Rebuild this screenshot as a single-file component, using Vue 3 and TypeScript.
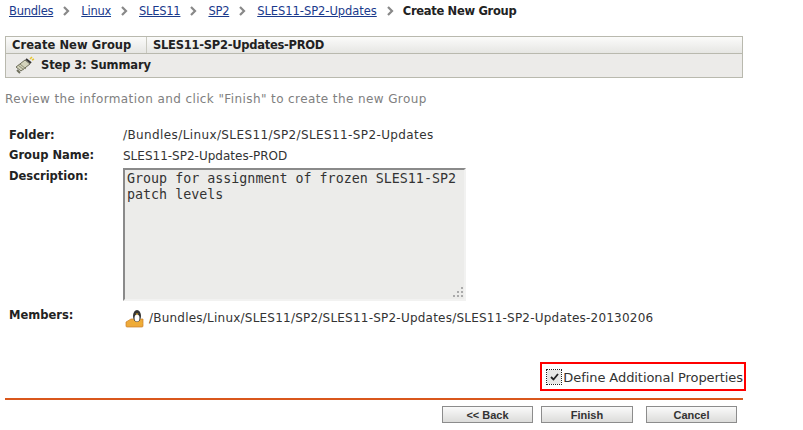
<script setup lang="ts">
const crumbs: string[] = ['Bundles', 'Linux', 'SLES11', 'SP2', 'SLES11-SP2-Updates']
</script>

<template>
  <div class="page">
    <nav class="crumbs">
      <template v-for="c in crumbs" :key="c">
        <a class="crumb" :class="{ long: c.length > 10 }">{{ c }}</a>
        <svg class="sep" width="7" height="10" viewBox="0 0 7 10"><path d="M1 1l4 4-4 4" fill="none" stroke="#888" stroke-width="2.200"/></svg>
      </template>
      <b class="current">Create New Group</b>
    </nav>
    <div class="head">
      <div class="head-top">
        <div class="ht-left">Create New Group</div>
        <div class="ht-right">SLES11-SP2-Updates-PROD</div>
      </div>
      <div class="head-step">
        <svg class="wand" width="20" height="18" viewBox="0 0 20 18">
          <path d="M1 11l9-7 5 4-9 7z" fill="#d3d3bc" stroke="#6f6f5c"/>
          <path d="M3 9l6 5M5 8l6 5" stroke="#8a8a70" fill="none"/>
          <path d="M2 14l3 3" stroke="#6f6f5c" stroke-width="2"/>
          <path d="M11 3l5 4" stroke="#333" stroke-width="2"/>
          <path d="M15 3l2-2M17 4l2-1" fill="none" stroke="#e5c632" stroke-width="1.500"/>
        </svg>
        <b>Step 3: Summary</b>
      </div>
    </div>
    <p class="intro">Review the information and click "Finish" to create the new Group</p>
    <div class="form">
      <b class="lab">Folder:</b>
      <div class="val folder">/Bundles/Linux/SLES11/SP2/SLES11-SP2-Updates</div>
      <b class="lab lab-g">Group Name:</b>
      <div class="val">SLES11-SP2-Updates-PROD</div>
      <b class="lab lab-d">Description:</b>
      <div class="ta">
        <div class="ta-text">Group for assignment of frozen SLES11-SP2<br>patch levels</div>
        <svg class="grip" width="12" height="12" viewBox="0 0 12 12" fill="#aaa">
          <rect x="10" y="1" width="2" height="2"/>
          <rect x="6" y="5" width="2" height="2"/><rect x="10" y="5" width="2" height="2"/>
          <rect x="2" y="9" width="2" height="2"/><rect x="6" y="9" width="2" height="2"/><rect x="10" y="9" width="2" height="2"/>
        </svg>
      </div>
      <b class="lab lab-m">Members:</b>
      <div class="val member">
        <svg width="20" height="20" viewBox="0 0 20 20">
          <path d="M1 13l5-3h12v7a1 1 0 0 1-1 1H2a1 1 0 0 1-1-1z" fill="#eeaa3a" stroke="#c9802a" stroke-width=".7"/>
          <ellipse cx="12" cy="7" rx="4" ry="6" fill="#333"/>
          <ellipse cx="12" cy="9" rx="2.500" ry="3.600" fill="#fff"/>
          <path d="M10.500 4.500h3L12 6.200z" fill="#e8b030"/>
          <path d="M6 15l3-2 2 2zM13 15l3-2 2 2z" fill="#f0b030"/>
        </svg>
        <span>/Bundles/Linux/SLES11/SP2/SLES11-SP2-Updates/SLES11-SP2-Updates-20130206</span>
      </div>
    </div>
    <div class="check-row">
      <label class="check">
        <span class="box-focus"><span class="box"><svg width="11" height="10" viewBox="0 0 11 10"><path d="M2 5l2.500 2.500L9 2" fill="none" stroke="#222" stroke-width="1.800"/></svg></span></span>
        <span>Define Additional Properties</span>
      </label>
    </div>
    <div class="rule"></div>
    <div class="btns">
      <button class="btn">&lt;&lt; Back</button>
      <button class="btn">Finish</button>
      <button class="btn">Cancel</button>
    </div>
  </div>
</template>

<style>
html, body { background: #fff; }
</style>

<style scoped>
.page {
  width: 803px;
  height: 430px;
  overflow: hidden;
  font-family: "DejaVu Sans", sans-serif;
  font-size: 12px;
  color: #333;
  box-sizing: border-box;
}
.crumbs {
  display: flex;
  align-items: center;
  height: 21px;
  padding-left: 9px;
  font-size: 11.500px;
}
.crumb {
  color: #1a3a8c;
  text-decoration: underline;
  letter-spacing: -.25px;
}
.crumb.long { letter-spacing: -.05px; }
.sep { margin: 0 11px 0 10px; }
.current { color: #222; margin-left: -2px; letter-spacing: -.3px; }
.head {
  margin: 15px 0 0 5px;
  width: 738px;
  box-sizing: border-box;
  border: 1px solid #b9b9ae;
}
.head-top {
  display: flex;
  height: 16px;
  line-height: 16px;
  font-size: 11.500px;
  font-weight: bold;
  color: #222;
  background: linear-gradient(#fbfbfa, #e6e6e3);
  border-bottom: 1px solid #b9b9ae;
}
.ht-left { width: 141px; padding-left: 6px; box-sizing: border-box; border-right: 1px solid #c9c9c0; letter-spacing: .06px; }
.ht-right { padding-left: 6px; letter-spacing: -.26px; }
.head-step {
  display: flex;
  align-items: center;
  height: 22px;
  padding: 0 0 1px 9px;
  background: #ecebe9;
  color: #222;
  gap: 6px;
  font-size: 11.500px;
  letter-spacing: -.13px;
}
.intro {
  margin: 14px 0 0 5px;
  color: #808080;
  line-height: 15px;
  letter-spacing: .4px;
}
.form {
  display: grid;
  grid-template-columns: 114px 1fr;
  margin: 21px 0 0 9px;
  row-gap: 6px;
  line-height: 15px;
}
.lab { color: #222; font-size: 11.500px; }
.lab-g { margin-top: -1px; }
.val { color: #333; }
.folder { letter-spacing: .39px; }
.lab-d { margin-top: -1px; }
.ta {
  position: relative;
  width: 343px;
  height: 133px;
  box-sizing: border-box;
  background: #ececea;
  border: 2px solid #8a8a8a;
  border-right-color: #f2f2f1;
  border-bottom-color: #f2f2f1;
  padding: 1px 2px;
  margin-top: -2px;
  font-family: "DejaVu Sans Mono", monospace;
  font-size: 13.330px;
  line-height: 16px;
  color: #333;
}
.grip { position: absolute; right: 1px; bottom: 1px; }
.lab-m { margin-top: 1px; }
.member {
  display: flex;
  align-items: center;
  gap: 4px;
  margin-top: 1px;
  height: 21px;
  margin-left: 2px;
  letter-spacing: .22px;
}
.check-row {
  display: flex;
  justify-content: flex-end;
  margin-top: 33px;
  width: 746px;
}
.check {
  display: flex;
  align-items: center;
  box-sizing: border-box;
  height: 29px;
  padding: 1px 1px 0 4px;
  border: 2px solid #f00;
  font-size: 13px;
  letter-spacing: -.07px;
  color: #333;
}
.box-focus {
  display: flex;
  padding: 1px;
  outline: 1px dotted #222;
  outline-offset: -1px;
  margin-right: 1px;
}
.box {
  display: flex;
  align-items: center;
  justify-content: center;
  width: 14px;
  height: 14px;
  background: #e8e8e6;
  border-radius: 2px;
}
.rule {
  margin: 7px 0 0 5px;
  width: 738px;
  height: 2px;
  background: #d9571c;
}
.btns {
  display: flex;
  margin: 6px 0 0 442px;
}
.btn {
  height: 17px;
  padding: 0;
  box-sizing: border-box;
  border: 1px solid #8c8c8c;
  background: linear-gradient(#fafafa, #dcdcda);
  font-family: "Liberation Sans", Arial, sans-serif;
  font-weight: bold;
  font-size: 11px;
  color: #333;
  width: 91px;
}
.btn:nth-child(2) { width: 92px; margin-left: 8px; }
.btn:nth-child(3) { width: 91px; margin-left: 13px; }
</style>
